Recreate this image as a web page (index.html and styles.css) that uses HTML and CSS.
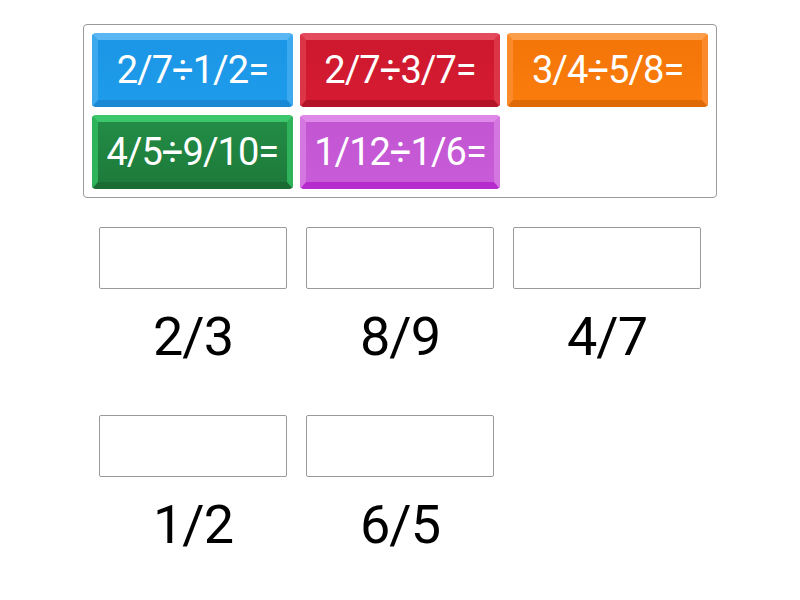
FILE: index.html
```html
<!DOCTYPE html>
<html>
<head>
<meta charset="utf-8">
<link rel="stylesheet" href="styles.css">
</head>
<body>
<div class="page">
  <div class="bank">
    <div class="tile blue">2/7÷1/2=</div>
    <div class="tile red">2/7÷3/7=</div>
    <div class="tile orange">3/4÷5/8=</div>
    <div class="tile green">4/5÷9/10=</div>
    <div class="tile purple">1/12÷1/6=</div>
  </div>
  <div class="targets">
    <div class="target"><div class="slot"></div><div class="label">2/3</div></div>
    <div class="target"><div class="slot"></div><div class="label">8/9</div></div>
    <div class="target"><div class="slot"></div><div class="label">4/7</div></div>
    <div class="target"><div class="slot"></div><div class="label">1/2</div></div>
    <div class="target"><div class="slot"></div><div class="label">6/5</div></div>
  </div>
</div>
</body>
</html>
```
FILE: styles.css
```css
html, body {
  margin: 0;
  padding: 0;
  background: #ffffff;
}
body {
  font-family: Roboto, "Liberation Sans", sans-serif;
}
.page {
  width: 800px;
  height: 600px;
  display: flex;
  flex-direction: column;
  align-items: center;
  padding-top: 24px;
  box-sizing: border-box;
}
.bank {
  width: 634px;
  height: 176px;
  box-sizing: border-box;
  border: 1px solid #9a9a9a;
  border-radius: 4px;
  padding: 8px;
  display: grid;
  grid-template-columns: repeat(3, 1fr);
  grid-auto-rows: 74px;
  column-gap: 7px;
  row-gap: 8px;
}
.tile {
  box-sizing: border-box;
  border-radius: 4px;
  border-style: solid;
  border-width: 7px 6px 7px 6px;
  color: #ffffff;
  font-size: 38px;
  letter-spacing: -1px;
  display: flex;
  align-items: center;
  justify-content: center;
  padding-bottom: 1px;
}
.blue {
  background: linear-gradient(#1c96e6, #1d9bea);
  border-color: #5bb7f3 #3ca9ef #1a88d4 #3ca9ef;
}
.red {
  background: linear-gradient(#cd182e, #d51b31);
  border-color: #e44b5c #dc3547 #b31428 #dc3547;
}
.orange {
  background: linear-gradient(#f47508, #f97c0c);
  border-color: #fd9e4a #fb8b2a #dd6a05 #fb8b2a;
}
.green {
  background: linear-gradient(#228c45, #1e7b3b);
  border-color: #3dc76c #2eb35b #1b6c33 #2eb35b;
}
.purple {
  background: linear-gradient(#c255d2, #c85bd7);
  border-color: #de88e9 #d577e1 #b52bcd #d577e1;
}
.targets {
  margin-top: 29px;
  width: 602px;
  display: grid;
  grid-template-columns: repeat(3, 188px);
  column-gap: 19px;
  grid-auto-rows: 188px;
}
.target {
  display: flex;
  flex-direction: column;
  align-items: center;
}
.slot {
  width: 188px;
  height: 62px;
  box-sizing: border-box;
  border: 1px solid #9a9a9a;
  border-radius: 2px;
  background: #ffffff;
}
.label {
  margin-top: 21px;
  font-size: 54px;
  line-height: 54px;
  color: #000000;
  letter-spacing: -1px;
}
```
